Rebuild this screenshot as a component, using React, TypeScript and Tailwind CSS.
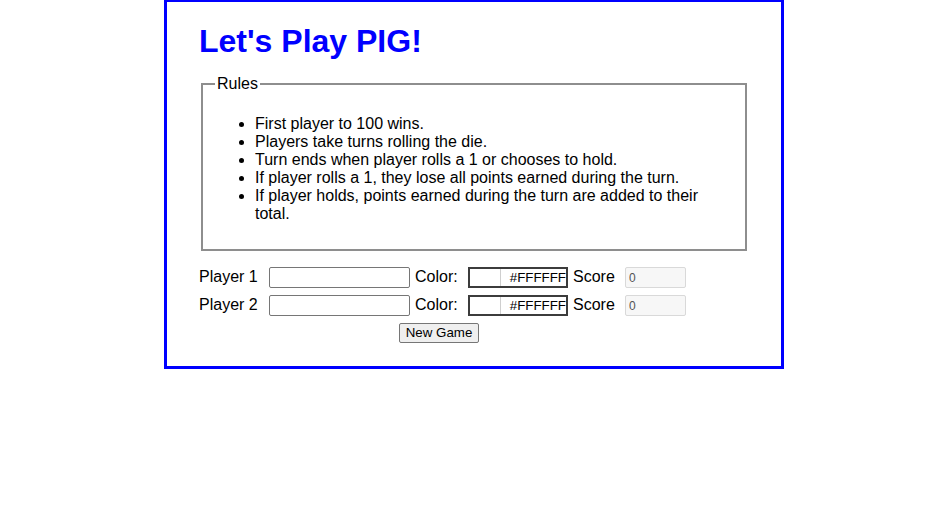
import { useState } from "react"

type Player = {
  name: string
  color: string
  score: number
}

const RULES = [
  "First player to 100 wins.",
  "Players take turns rolling the die.",
  "Turn ends when player rolls a 1 or chooses to hold.",
  "If player rolls a 1, they lose all points earned during the turn.",
  "If player holds, points earned during the turn are added to their total.",
]

function ColorBox({ value }: { value: string }) {
  return (
    <div className="flex h-[21px] w-[100px] overflow-hidden border-2 border-[#3c3c3c] bg-white">
      <div className="w-[31px] shrink-0 border-r border-[#cfcfcf]" style={{ background: value }} />
      <input
        readOnly
        value={value.toUpperCase()}
        className="min-w-0 flex-1 bg-white pr-0 text-right text-[13.33px] leading-[17px] text-black outline-none"
      />
    </div>
  )
}

function PlayerRow({ idx, player }: { idx: number; player: Player }) {
  return (
    <div className="flex h-[28px] items-center">
      <span className="-mt-[2px] w-[70px] shrink-0">Player {idx}</span>
      <input
        type="text"
        defaultValue={player.name}
        className="h-[21px] w-[141px] shrink-0 rounded-[2px] border border-[#767676] bg-white px-[2px] text-[13.33px] outline-none"
      />
      <span className="-mt-[2px] ml-[5px] w-[53px] shrink-0">Color:</span>
      <ColorBox value={player.color} />
      <span className="-mt-[2px] ml-[5px] w-[52px] shrink-0">Score</span>
      <input
        readOnly
        value={player.score}
        className="h-[21px] w-[61px] shrink-0 rounded-[2px] border border-[#d9d9d9] bg-[#f7f7f7] pl-[3px] text-[12px] text-[#545454] outline-none"
      />
    </div>
  )
}

export default function App() {
  const [players, setPlayers] = useState<Player[]>([
    { name: "", color: "#ffffff", score: 0 },
    { name: "", color: "#ffffff", score: 0 },
  ])

  function newGame() {
    setPlayers((ps) => ps.map((p) => ({ ...p, score: 0 })))
  }

  return (
    <div className="min-h-screen bg-white font-['Liberation_Sans',Arial,sans-serif] text-[16px] leading-[18px] text-black">
      <div className="-mt-px ml-[164px] w-[620px] border-[3px] border-[#0000ff] px-8 pb-[23px]">
        <h1 className="mt-[21px] mb-[15px] text-[32px] font-bold leading-[37px] text-[#0000ff]">Let's Play PIG!</h1>

        <fieldset className="mx-[2px] border-2 border-[#8e8e8e] px-3 pt-[5.6px] pb-[10px]">
          <legend className="px-[2px] leading-[18px]">Rules</legend>
          <ul className="my-4 list-disc pl-10">
            {RULES.map((r) => (
              <li key={r}>{r}</li>
            ))}
          </ul>
        </fieldset>

        <div className="mt-[13px]">
          {players.map((p, i) => (
            <PlayerRow key={i} idx={i + 1} player={p} />
          ))}
        </div>

        <button
          onClick={newGame}
          className="mt-[3px] ml-[200px] h-[20px] w-[80px] rounded-[2px] border border-[#767676] bg-[#efefef] text-[13.33px] leading-[16px] text-black"
        >
          New Game
        </button>
      </div>
    </div>
  )
}
